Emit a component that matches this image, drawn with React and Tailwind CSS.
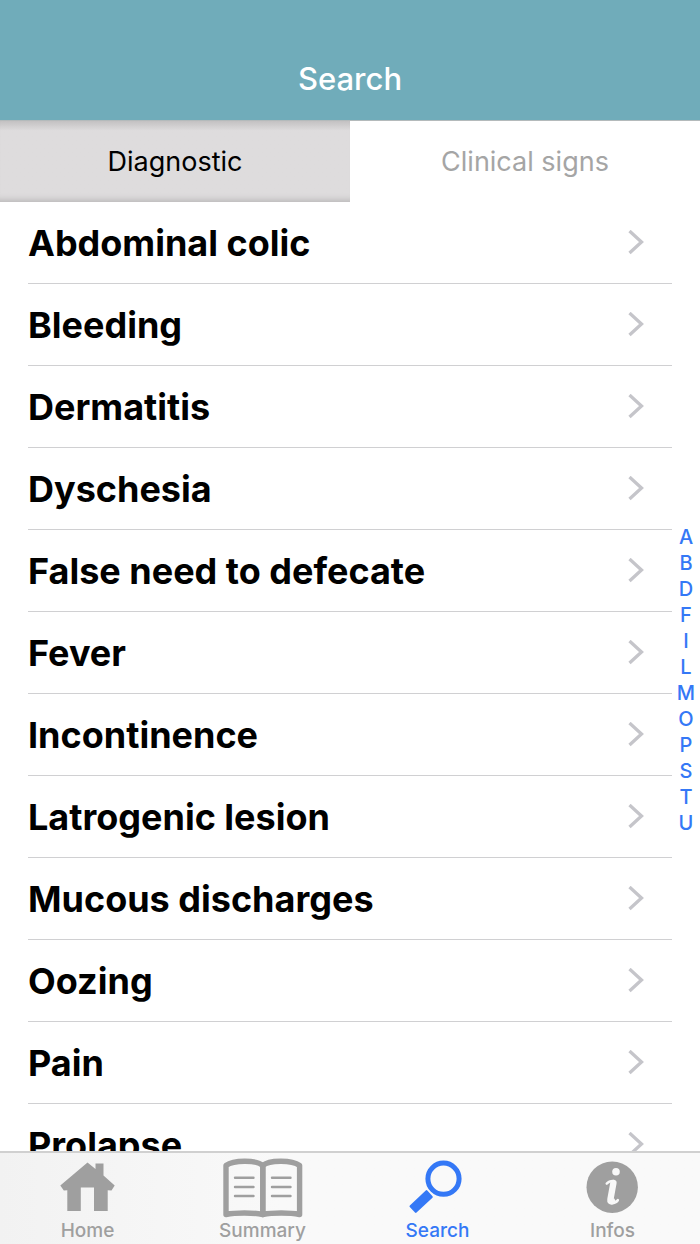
import { useState } from "react";

const signs = [
  "Abdominal colic",
  "Bleeding",
  "Dermatitis",
  "Dyschesia",
  "False need to defecate",
  "Fever",
  "Incontinence",
  "Latrogenic lesion",
  "Mucous discharges",
  "Oozing",
  "Pain",
  "Prolapse",
];

const letters = ["A", "B", "D", "F", "I", "L", "M", "O", "P", "S", "T", "U"];

function HomeIcon() {
  return (
    <svg width="84" height="62" viewBox="0 0 84 62" fill="currentColor" aria-hidden="true">
      <path d="M41.5 5.5 49.5 12V6.5h8v12L68.7 28.5 65.5 33.5 61.7 33.2V54H48V30.6H34.8V54H21.3V33.2L17.8 33.5 14.3 28.5Z" />
    </svg>
  );
}

function BookIcon() {
  return (
    <svg width="84" height="62" viewBox="0 0 84 62" fill="none" stroke="currentColor" aria-hidden="true">
      <g strokeWidth="5.4" strokeLinejoin="round">
        <path d="M41.8 8.5C36 3 13 2.5 5 8.5V57.5C15 55.5 32 55.5 41.8 57.5Z" />
        <path d="M41.8 8.5C47.6 3 70.6 2.5 78.6 8.5V57.5C68.6 55.5 51.6 55.5 41.8 57.5Z" />
      </g>
      <path
        d="M14 20.8H32.5M14 30H32.5M14 39H32.5M51 20.8H69.5M51 30H69.5M51 39H69.5"
        strokeWidth="2.4"
        strokeLinecap="round"
      />
    </svg>
  );
}

function SearchIcon() {
  return (
    <svg width="84" height="62" viewBox="0 0 84 62" fill="currentColor" stroke="currentColor" aria-hidden="true">
      <circle cx="47.5" cy="21.7" r="15.6" fill="none" strokeWidth="5" />
      <path d="M30.5 34.2 35.7 40 19.8 54.8 14.6 49.2Z" strokeWidth="2.2" strokeLinejoin="round" />
    </svg>
  );
}

function InfoIcon() {
  return (
    <svg width="84" height="62" viewBox="0 0 84 62" aria-hidden="true">
      <circle cx="41.2" cy="30.2" r="25.7" fill="currentColor" />
      <circle cx="45" cy="14.8" r="3.8" fill="#f8f8f8" />
      <g fill="none" stroke="#f8f8f8" strokeLinecap="round" strokeLinejoin="round">
        <path d="M42.4 26 39.4 42.5Q39 44.8 41.2 44.2" strokeWidth="6.4" />
        <path d="M35.8 26.5Q38 24 42 24M40.5 46.2Q45 46 46.8 43.2" strokeWidth="2.6" />
      </g>
    </svg>
  );
}

const navItems = [
  { label: "Home", Icon: HomeIcon },
  { label: "Summary", Icon: BookIcon },
  { label: "Search", Icon: SearchIcon },
  { label: "Infos", Icon: InfoIcon },
];

export default function App() {
  const [tab, setTab] = useState("signs");

  return (
    <div className="flex h-screen flex-col bg-white font-['Inter',sans-serif] text-black">
      <header className="flex h-[120px] shrink-0 items-end justify-center bg-[#70acba] pb-5">
        <h1 className="text-[31px] leading-[42px] font-medium text-white">Search</h1>
      </header>

      <div className="grid shrink-0 grid-cols-2 border-t border-[#b4babb] text-[27px]">
        <button
          type="button"
          onClick={() => setTab("diagnostic")}
          aria-pressed={tab === "diagnostic"}
          className="h-[81px] bg-linear-to-b from-[#c3c1c2] via-[#dedcdd] via-12% to-[#dedcdd] pt-0.5 shadow-[inset_0_-8px_6px_-6px_#b8b6b7]"
        >
          Diagnostic
        </button>
        <button
          type="button"
          onClick={() => setTab("signs")}
          aria-pressed={tab === "signs"}
          className="h-[81px] bg-white pt-0.5 text-[#a5a5a5]"
        >
          Clinical signs
        </button>
      </div>

      <main className="flex min-h-0 flex-1">
        <ul className="flex-1 overflow-y-auto pl-7 [scrollbar-width:none]">
          {signs.map((sign) => (
            <li key={sign} id={sign[0]} className="border-b border-[#d0d0d2]">
              <button type="button" className="flex h-[81px] w-full items-center justify-between pr-7 text-left">
                <span className="text-[36px] font-bold">{sign}</span>
                <svg width="16" height="26" viewBox="0 0 16 26" fill="none" stroke="#c5c5ca" strokeWidth="3.3" aria-hidden="true">
                  <path d="M1.5 1 13.5 12 1.5 23" />
                </svg>
              </button>
            </li>
          ))}
        </ul>
        {/* Alphabet index */}
        <nav aria-label="Index" className="flex w-7 flex-col items-center justify-center pt-1.5 text-[20px] leading-[26px] font-medium text-[#3478f6]">
          {letters.map((letter) => (
            <a key={letter} href={`#${letter}`}>{letter}</a>
          ))}
        </nav>
      </main>

      <nav aria-label="Main" className="grid shrink-0 grid-cols-4 border-t-2 border-[#d0d0d0] bg-linear-to-r from-[#f2f2f2] to-[#f9f9f9] to-40% pt-1 pb-px">
        {navItems.map(({ label, Icon }) => (
          <a
            key={label}
            href={`#${label.toLowerCase()}`}
            className={label === "Search" ? "flex flex-col items-center text-[#3478f6]" : "flex flex-col items-center text-[#9f9f9f]"}
          >
            <Icon />
            <span className="text-[19px] leading-6 font-medium">{label}</span>
          </a>
        ))}
      </nav>
    </div>
  );
}
